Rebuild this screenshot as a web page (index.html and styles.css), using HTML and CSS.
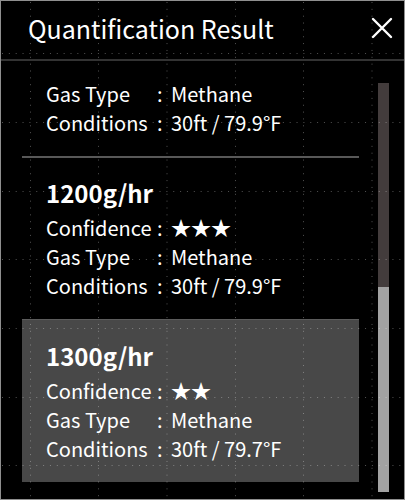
FILE: index.html
```html
<!DOCTYPE html>
<html lang="en">
<head>
<meta charset="utf-8">
<title>Quantification Result</title>
<link rel="stylesheet" href="styles.css">
</head>
<body>
<div class="panel">
  <header class="head">
    <h1 class="title">Quantification Result</h1>
    <button class="close" aria-label="Close">
      <svg width="22" height="22" viewBox="0 0 22 22"><path d="M2 2 L20 20 M20 2 L2 20" stroke="#fff" stroke-width="2.4" stroke-linecap="round" fill="none"/></svg>
    </button>
  </header>
  <div class="body">
    <div class="list">
      <div class="item partial">
        <div class="row"><span class="label">Gas Type</span><span class="colon">:</span><span class="value">Methane</span></div>
        <div class="row"><span class="label">Conditions</span><span class="colon">:</span><span class="value">30ft / 79.9°F</span></div>
      </div>
      <div class="item">
        <div class="rate">1200g/hr</div>
        <div class="row"><span class="label">Confidence</span><span class="colon">:</span><span class="value stars">★★★</span></div>
        <div class="row"><span class="label">Gas Type</span><span class="colon">:</span><span class="value">Methane</span></div>
        <div class="row"><span class="label">Conditions</span><span class="colon">:</span><span class="value">30ft / 79.9°F</span></div>
      </div>
      <div class="item selected">
        <div class="rate">1300g/hr</div>
        <div class="row"><span class="label">Confidence</span><span class="colon">:</span><span class="value stars">★★</span></div>
        <div class="row"><span class="label">Gas Type</span><span class="colon">:</span><span class="value">Methane</span></div>
        <div class="row"><span class="label">Conditions</span><span class="colon">:</span><span class="value">30ft / 79.7°F</span></div>
      </div>
    </div>
    <div class="scrollbar"><div class="thumb"></div></div>
  </div>
  <svg class="grid" width="405" height="500" viewBox="0 0 405 500" aria-hidden="true">
    <g stroke="rgba(255,255,255,0.32)" stroke-width="1" stroke-dasharray="1 5.85">
      <line x1="30.5" y1="2" x2="30.5" y2="500"/>
      <line x1="98.5" y1="2" x2="98.5" y2="500"/>
      <line x1="167" y1="2" x2="167" y2="500"/>
      <line x1="235.5" y1="2" x2="235.5" y2="500"/>
      <line x1="303.5" y1="2" x2="303.5" y2="500"/>
      <line x1="372" y1="2" x2="372" y2="500"/>
      <line x1="2" y1="53.5" x2="405" y2="53.5"/>
      <line x1="2" y1="122.5" x2="405" y2="122.5"/>
      <line x1="2" y1="191.5" x2="405" y2="191.5"/>
      <line x1="2" y1="259.5" x2="405" y2="259.5"/>
      <line x1="2" y1="328.5" x2="405" y2="328.5"/>
      <line x1="2" y1="397.5" x2="405" y2="397.5"/>
      <line x1="2" y1="465.5" x2="405" y2="465.5"/>
    </g>
  </svg>
</div>
</body>
</html>
```

FILE: styles.css
```css
* { box-sizing: border-box; }
html, body { margin: 0; padding: 0; background: #000; }
body {
  font-family: "Noto Sans CJK KR", "Noto Sans", sans-serif;
  color: #fff;
}
.panel {
  position: relative;
  width: 405px;
  height: 500px;
  background: #000;
  border: 1px solid #8f8f8f;
  display: flex;
  flex-direction: column;
  overflow: hidden;
}
.head {
  height: 60px;
  flex: none;
  display: flex;
  align-items: center;
  justify-content: space-between;
  padding: 0 10px 4px 27px;
  border-bottom: 2px solid #333;
}
.title {
  margin: 0;
  font-size: 25px;
  font-weight: 400;
  letter-spacing: 0;
}
.close {
  background: none;
  border: 0;
  padding: 0;
  width: 24px;
  height: 24px;
  display: flex;
  align-items: center;
  justify-content: center;
}
.body {
  flex: 1;
  display: flex;
  padding: 0 14px 0 21px;
  min-height: 0;
}
.list {
  width: 337px;
  flex: none;
  padding-top: 18px;
}
.item {
  padding: 17px 24px 19px;
  border-top: 2px solid #585858;
}
.item.partial {
  padding-top: 0;
  border-top: 0;
}
.item.selected {
  background: #484848;
  border-top: 1px solid #5c5c5c;
  padding-top: 18px;
}
.rate {
  font-size: 24px;
  font-weight: 700;
  line-height: 36px;
  margin-bottom: 2px;
}
.row {
  display: flex;
  align-items: center;
  font-size: 20px;
  line-height: 29px;
  white-space: nowrap;
}
.label { width: 111px; flex: none; }
.colon { width: 6px; flex: none; }
.value { margin-left: 8px; }
.stars { font-size: 20px; letter-spacing: 0; }
.scrollbar {
  margin: 22px 0 7px 19px;
  width: 11px;
  flex: none;
  background: #433c3c;
  display: flex;
  flex-direction: column;
  justify-content: flex-end;
}
.thumb {
  height: 205px;
  background: #a2a2a2;
}
.grid {
  position: absolute;
  left: -1px;
  top: -1px;
  pointer-events: none;
}
```
